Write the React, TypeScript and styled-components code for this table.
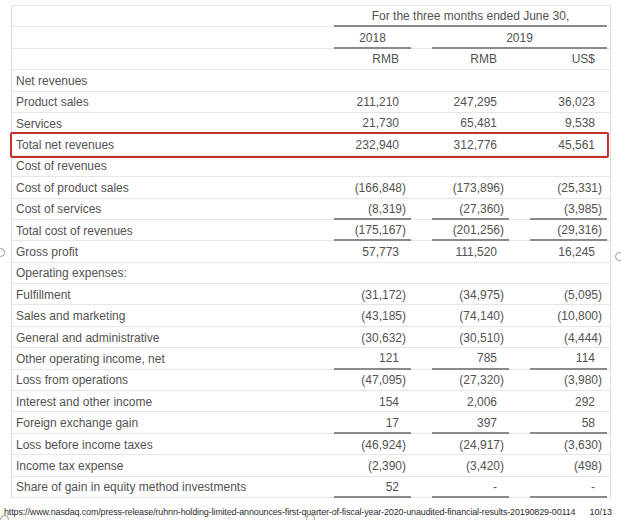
import React from 'react'
import styled, { createGlobalStyle } from 'styled-components'

const GlobalStyle = createGlobalStyle`
  html, body {
    margin: 0;
    padding: 0;
    background: #ffffff;
  }
  body {
    font-family: "Liberation Sans", Arial, sans-serif;
  }
`

type Line = {
  label: string
  values?: string[]
  rule?: boolean
  highlight?: boolean
}

const lines: Line[] = [
  { label: 'Net revenues' },
  { label: 'Product sales', values: ['211,210', '247,295', '36,023'] },
  { label: 'Services', values: ['21,730', '65,481', '9,538'], rule: true },
  { label: 'Total net revenues', values: ['232,940', '312,776', '45,561'], highlight: true },
  { label: 'Cost of revenues' },
  { label: 'Cost of product sales', values: ['(166,848)', '(173,896)', '(25,331)'] },
  { label: 'Cost of services', values: ['(8,319)', '(27,360)', '(3,985)'], rule: true },
  { label: 'Total cost of revenues', values: ['(175,167)', '(201,256)', '(29,316)'], rule: true },
  { label: 'Gross profit', values: ['57,773', '111,520', '16,245'] },
  { label: 'Operating expenses:' },
  { label: 'Fulfillment', values: ['(31,172)', '(34,975)', '(5,095)'] },
  { label: 'Sales and marketing', values: ['(43,185)', '(74,140)', '(10,800)'] },
  { label: 'General and administrative', values: ['(30,632)', '(30,510)', '(4,444)'] },
  { label: 'Other operating income, net', values: ['121', '785', '114'], rule: true },
  { label: 'Loss from operations', values: ['(47,095)', '(27,320)', '(3,980)'] },
  { label: 'Interest and other income', values: ['154', '2,006', '292'] },
  { label: 'Foreign exchange gain', values: ['17', '397', '58'], rule: true },
  { label: 'Loss before income taxes', values: ['(46,924)', '(24,917)', '(3,630)'] },
  { label: 'Income tax expense', values: ['(2,390)', '(3,420)', '(498)'] },
  { label: 'Share of gain in equity method investments', values: ['52', '-', '-'], rule: true },
]

export default function App() {
  return (
    <Page>
      <GlobalStyle />
      <Table>
        <Row>
          <LabelCell />
          <HeadCell $span={3} $rule $center>For the three months ended June 30,</HeadCell>
        </Row>
        <Row>
          <LabelCell />
          <HeadCell $rule $center>2018</HeadCell>
          <HeadCell $span={2} $rule $center>2019</HeadCell>
        </Row>
        <Row>
          <LabelCell />
          <HeadCell>RMB</HeadCell>
          <HeadCell>RMB</HeadCell>
          <HeadCell>US$</HeadCell>
        </Row>
        {lines.map(line => (
          <Row key={line.label} $highlight={line.highlight}>
            <LabelCell>{line.label}</LabelCell>
            {(line.values || ['', '', '']).map((v, i) => (
              <NumCell key={i} $rule={line.rule} $neg={v.startsWith('(')}>
                {v}
              </NumCell>
            ))}
          </Row>
        ))}
      </Table>
      <Footer>
        <Url>https://www.nasdaq.com/press-release/ruhnn-holding-limited-announces-first-quarter-of-fiscal-year-2020-unaudited-financial-results-20190829-00114</Url>
        <PageNo>10/13</PageNo>
      </Footer>
      <Ring style={{ left: -4, top: 248 }} />
      <Ring style={{ left: 615, top: 252 }} />
      <Ring style={{ left: 0, top: 515 }} />
      <Ring style={{ left: 306, top: 514 }} />
    </Page>
  )
}

const Page = styled.div`
  position: relative;
  width: 621px;
  height: 520px;
  overflow: hidden;
  background: #ffffff;
  padding-top: 5px;
  box-sizing: border-box;
`

const Table = styled.div`
  margin-left: 11px;
  width: 600px;
  border-left: 1px solid #dcdcdc;
  border-right: 1px solid #dcdcdc;
  border-top: 1px solid #e4e4e4;
  box-sizing: border-box;
  color: #525252;
  font-size: 12px;
`

const Row = styled.div<{ $highlight?: boolean }>`
  position: relative;
  display: grid;
  grid-template-columns: 301px 77px 77px 77px;
  column-gap: 21px;
  padding-right: 3px;
  height: 21.4px;
  box-sizing: border-box;
  border-bottom: 1px solid #e6e6e6;

  ${p =>
    p.$highlight &&
    `
    &::after {
      content: '';
      position: absolute;
      left: -2px;
      right: 1px;
      top: -2px;
      bottom: -3px;
      border: 2px solid #c4302b;
      border-radius: 2px;
      pointer-events: none;
    }
  `}
`

const LabelCell = styled.div`
  display: flex;
  align-items: center;
  padding-left: 4px;
  padding-top: 1px;
  white-space: nowrap;
`

const HeadCell = styled.div<{ $span?: number; $rule?: boolean; $center?: boolean }>`
  grid-column: span ${p => p.$span || 1};
  display: flex;
  align-items: center;
  justify-content: ${p => (p.$center ? 'center' : 'flex-end')};
  padding-right: ${p => (p.$center ? '0' : '12px')};
  padding-top: 1px;
  border-bottom: ${p => (p.$rule ? '2px solid #8a8a8a' : 'none')};
  margin-bottom: ${p => (p.$rule ? '-1px' : '0')};
  white-space: nowrap;
`

const NumCell = styled.div<{ $rule?: boolean; $neg?: boolean }>`
  display: flex;
  align-items: center;
  justify-content: flex-end;
  padding-right: ${p => (p.$neg ? '5px' : '12px')};
  padding-top: 1px;
  border-bottom: ${p => (p.$rule ? '2px solid #8a8a8a' : 'none')};
  margin-bottom: ${p => (p.$rule ? '-1px' : '0')};
  white-space: nowrap;
`

const Footer = styled.div`
  display: flex;
  justify-content: space-between;
  align-items: center;
  margin-top: 9px;
  padding: 0 9px 0 4px;
  font-size: 9px;
  color: #2e2e2e;
`

const Url = styled.span`
  white-space: nowrap;
  letter-spacing: -0.15px;
`

const PageNo = styled.span`
  font-size: 9px;
`

const Ring = styled.div`
  position: absolute;
  width: 7px;
  height: 7px;
  border: 1px solid #9a9a9a;
  border-radius: 50%;
`
